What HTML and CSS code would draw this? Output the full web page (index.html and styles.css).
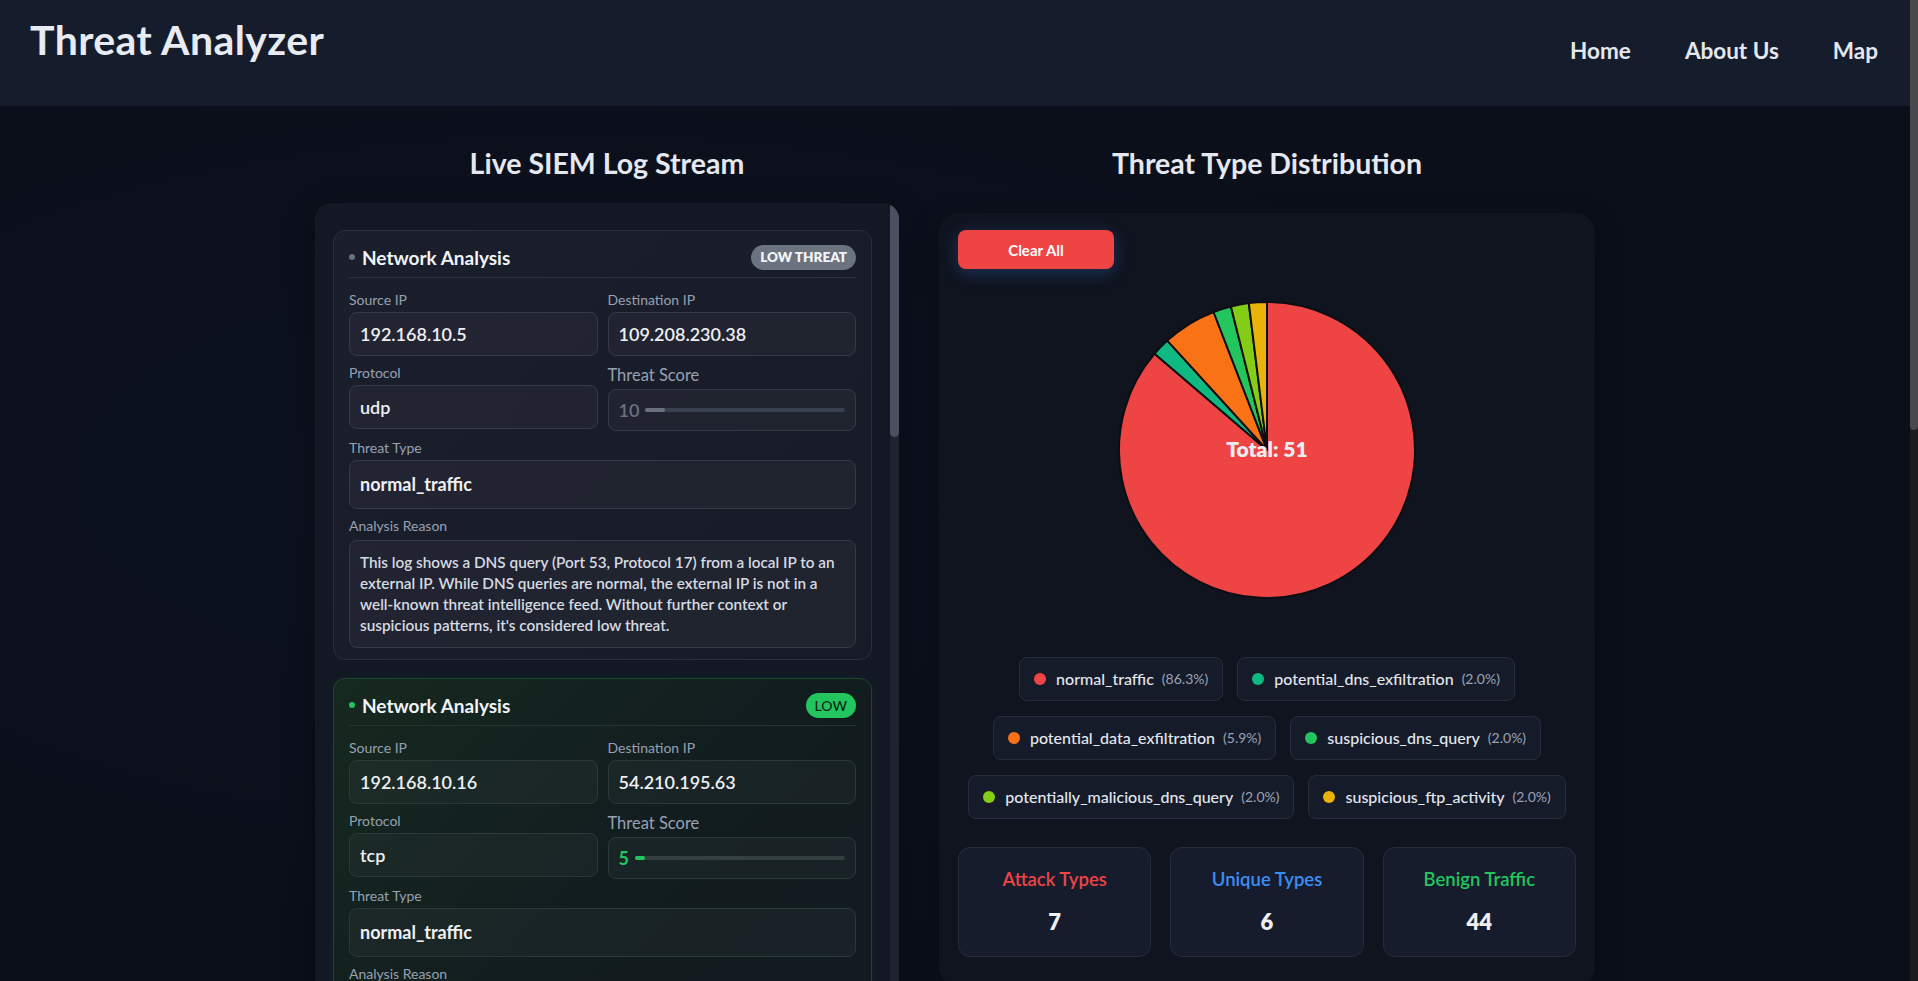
FILE: index.html
```html
<!DOCTYPE html>
<html lang="en">
<head>
<meta charset="utf-8">
<title>Threat Analyzer</title>
<link rel="stylesheet" href="styles.css">
</head>
<body>
<header class="topbar">
  <h1 class="brand">Threat Analyzer</h1>
  <nav class="nav">
    <a href="#" class="nav-link">Home</a>
    <a href="#" class="nav-link">About Us</a>
    <a href="#" class="nav-link">Map</a>
  </nav>
</header>

<main class="main">
  <div class="columns">
    <section class="col col-left">
      <h2 class="section-title">Live SIEM Log Stream</h2>
      <div class="log-panel">
        <div class="log-scroll">

          <article class="log-card">
            <div class="log-head">
              <div class="log-title"><span class="dot dot-gray"></span>Network Analysis</div>
              <span class="badge badge-gray">LOW THREAT</span>
            </div>
            <div class="grid2">
              <div class="field"><div class="label">Source IP</div><div class="box">192.168.10.5</div></div>
              <div class="field"><div class="label">Destination IP</div><div class="box">109.208.230.38</div></div>
              <div class="field"><div class="label">Protocol</div><div class="box">udp</div></div>
              <div class="field"><div class="label label-lg">Threat Score</div>
                <div class="box box-score"><span class="score score-gray">10</span><span class="track"><span class="fill fill-gray" style="width:10%"></span></span></div>
              </div>
            </div>
            <div class="field field-type"><div class="label">Threat Type</div><div class="box box-type">normal_traffic</div></div>
            <div class="field field-last"><div class="label label-reason">Analysis Reason</div><div class="box box-reason">This log shows a DNS query (Port 53, Protocol 17) from a local IP to an external IP. While DNS queries are normal, the external IP is not in a <span class="nowrap">well-known</span> threat intelligence feed. Without further context or suspicious patterns, it's considered low threat.</div></div>
          </article>

          <article class="log-card log-card-green">
            <div class="log-head">
              <div class="log-title"><span class="dot dot-green"></span>Network Analysis</div>
              <span class="badge badge-green">LOW</span>
            </div>
            <div class="grid2">
              <div class="field"><div class="label">Source IP</div><div class="box">192.168.10.16</div></div>
              <div class="field"><div class="label">Destination IP</div><div class="box">54.210.195.63</div></div>
              <div class="field"><div class="label">Protocol</div><div class="box">tcp</div></div>
              <div class="field"><div class="label label-lg">Threat Score</div>
                <div class="box box-score"><span class="score score-green">5</span><span class="track"><span class="fill fill-green" style="width:5%"></span></span></div>
              </div>
            </div>
            <div class="field field-type"><div class="label">Threat Type</div><div class="box box-type">normal_traffic</div></div>
            <div class="field field-last"><div class="label label-reason">Analysis Reason</div><div class="box box-reason">Outbound TCP connection from an internal host to a public cloud address. The destination is a common service provider and the traffic volume is normal, so it's considered low threat.</div></div>
          </article>

        </div>
        <div class="vscroll"><div class="vscroll-thumb"></div></div>
      </div>
    </section>

    <section class="col col-right">
      <h2 class="section-title section-title-right">Threat Type Distribution</h2>
      <div class="chart-panel">
        <button class="clear-btn" type="button">Clear All</button>
        <div class="pie-wrap">
          <svg class="pie" width="300" height="300" viewBox="0 0 300 300">
            <g stroke="#0c0e13" stroke-width="2" stroke-linejoin="round">
              <path fill="#ef4444" d="M150,150 L150,2 A148,148 0 1,1 37.60,53.71 Z"/>
              <path fill="#10b981" d="M150,150 L37.60,53.71 A148,148 0 0,1 50.29,40.63 Z"/>
              <path fill="#f97316" d="M150,150 L50.29,40.63 A148,148 0 0,1 96.54,11.99 Z"/>
              <path fill="#22c55e" d="M150,150 L96.54,11.99 A148,148 0 0,1 113.90,6.47 Z"/>
              <path fill="#84cc16" d="M150,150 L113.90,6.47 A148,148 0 0,1 131.81,3.12 Z"/>
              <path fill="#eab308" d="M150,150 L131.81,3.12 A148,148 0 0,1 150,2 Z"/>
            </g>
            <text class="pie-total" x="150" y="157" text-anchor="middle">Total: 51</text>
          </svg>
        </div>
        <div class="legend">
          <div class="legend-item"><span class="ldot" style="background:#ef4444"></span><span class="lname">normal_traffic</span><span class="lpct">(86.3%)</span></div>
          <div class="legend-item"><span class="ldot" style="background:#10b981"></span><span class="lname">potential_dns_exfiltration</span><span class="lpct">(2.0%)</span></div>
          <div class="legend-item"><span class="ldot" style="background:#f97316"></span><span class="lname">potential_data_exfiltration</span><span class="lpct">(5.9%)</span></div>
          <div class="legend-item"><span class="ldot" style="background:#22c55e"></span><span class="lname">suspicious_dns_query</span><span class="lpct">(2.0%)</span></div>
          <div class="legend-item"><span class="ldot" style="background:#84cc16"></span><span class="lname">potentially_malicious_dns_query</span><span class="lpct">(2.0%)</span></div>
          <div class="legend-item"><span class="ldot" style="background:#eab308"></span><span class="lname">suspicious_ftp_activity</span><span class="lpct">(2.0%)</span></div>
        </div>
        <div class="stats">
          <div class="stat"><div class="stat-title stat-red">Attack Types</div><div class="stat-value">7</div></div>
          <div class="stat"><div class="stat-title stat-blue">Unique Types</div><div class="stat-value">6</div></div>
          <div class="stat"><div class="stat-title stat-green">Benign Traffic</div><div class="stat-value">44</div></div>
        </div>
      </div>
    </section>
  </div>
</main>

<div class="page-scrollbar"><div class="page-scrollbar-thumb"></div></div>
</body>
</html>
```

FILE: styles.css
```css
* { box-sizing: border-box; }

html { background: #0a0f1a; }

body {
  margin: 0;
  padding-right: 8px;
  background: #0a0f1a;
  color: #e5e7eb;
  font-family: "Lato", "Noto Sans", sans-serif;
}

/* page scrollbar (drawn over the right gutter) */
.page-scrollbar {
  position: fixed;
  top: 0;
  right: 0;
  width: 8px;
  height: 100vh;
  background: #1c1c20;
}

.page-scrollbar-thumb {
  height: 430px;
  background: #48484d;
  border-radius: 0 0 4px 4px;
}

.topbar {
  height: 106px;
  background: #151d2c;
  display: flex;
  justify-content: space-between;
  align-items: flex-start;
  padding: 0 32px 0 30px;
}

.brand {
  margin: 16px 0 0;
  font-size: 41px;
  line-height: 48px;
  font-weight: 700;
  color: #e8ebf2;
  letter-spacing: 0.4px;
}

.nav {
  display: flex;
  gap: 54px;
  margin-top: 38px;
}

.nav-link {
  color: #e5e7ee;
  text-decoration: none;
  font-size: 22.5px;
  line-height: 26px;
  font-weight: 700;
}

.main {
  padding-top: 40px;
  padding-bottom: 40px;
  background: radial-gradient(ellipse at 30% 40%, #0d1220 0%, #0a0f1a 60%);
}

.columns {
  width: 1280px;
  margin: 0 auto;
  display: grid;
  grid-template-columns: 584px 656px;
  column-gap: 40px;
  align-items: start;
}

.section-title {
  margin: 0 0 23px;
  text-align: center;
  font-size: 28.5px;
  line-height: 34px;
  font-weight: 700;
  color: #e5e8f0;
}

.section-title-right { margin-bottom: 33px; }

/* log stream */
.log-panel {
  display: flex;
  height: 800px;
  overflow: hidden;
  background: #131824;
  border-radius: 16px;
  box-shadow: 0 10px 30px rgba(0, 0, 0, 0.35);
}

.log-scroll {
  flex: 1;
  min-width: 0;
  overflow: hidden;
  padding: 27px 18px 18px;
}

.vscroll {
  width: 9px;
  flex-shrink: 0;
  background: #1f2330;
}

.vscroll-thumb {
  height: 234px;
  background: #4b5060;
  border-radius: 5px;
}

.log-card {
  border: 1px solid #2a2f3c;
  border-radius: 12px;
  padding: 14px 15px 11px;
  margin-bottom: 18px;
  background: linear-gradient(135deg, #1b1f2b 0%, #171b27 100%);
}

.log-card-green {
  border-color: #1d4630;
  background: linear-gradient(135deg, #16291f 0%, #121d1f 50%, #121a20 100%);
  box-shadow: 0 0 12px rgba(34, 197, 94, 0.06);
}

.log-head {
  display: flex;
  justify-content: space-between;
  align-items: center;
  height: 33px;
  padding-bottom: 8px;
  border-bottom: 1px solid #2c3140;
  margin-bottom: 12px;
}

.log-card-green .log-head { border-bottom-color: #24352f; }

.log-title {
  display: flex;
  align-items: center;
  font-size: 19px;
  font-weight: 700;
  color: #f1f3f7;
}

.dot {
  width: 6px;
  height: 6px;
  border-radius: 50%;
  margin-right: 7px;
}
.dot-gray { background: #6b7280; }
.dot-green { background: #22c55e; }

.badge {
  height: 25px;
  line-height: 25px;
  border-radius: 13px;
  padding: 0 9px;
  font-size: 13.5px;
  font-weight: 800;
}
.badge-gray { background: #6b7280; color: #f3f4f6; }
.badge-green { background: #22c55e; color: #0d2a18; font-weight: 500; font-size: 14px; padding: 0 9px; }

.grid2 {
  display: grid;
  grid-template-columns: 1fr 1fr;
  column-gap: 10px;
  row-gap: 7px;
  margin-bottom: 7px;
}

.field { margin-bottom: 7px; }
.grid2 .field { margin-bottom: 0; }
.field-type { margin-bottom: 7px; }
.field-last { margin-bottom: 0; }

.label {
  font-size: 14px;
  line-height: 20px;
  color: #97a1b3;
  margin-bottom: 2px;
}
.label-lg { font-size: 16.5px; line-height: 24px; }
.label-reason { margin-bottom: 4px; }

.box {
  border: 1px solid #343a48;
  background: rgba(255, 255, 255, 0.035);
  border-radius: 8px;
  padding: 9px 10px;
  font-size: 18px;
  line-height: 24px;
  font-weight: 600;
  color: #eef0f4;
}

.log-card-green .box { border-color: #2b3a39; background: rgba(255, 255, 255, 0.03); }

.box-score {
  display: flex;
  align-items: center;
  padding: 8px 10px;
}

.score { font-size: 18px; font-weight: 600; margin-right: 6px; }
.score-gray { color: #6b7280; }
.score-green { color: #22c55e; font-weight: 700; }

.track {
  flex: 1;
  height: 4px;
  border-radius: 2px;
  background: #394050;
  display: block;
}
.log-card-green .track { background: #34403f; }

.fill { display: block; height: 100%; border-radius: 2px; }
.fill-gray { background: #6b7280; }
.fill-green { background: #22c55e; }

.box-type {
  padding: 11px 10px;
  line-height: 25px;
  font-weight: 700;
  margin-top: 1px;
}

.box-reason {
  font-size: 15.3px;
  line-height: 21px;
  font-weight: 600;
  color: #d6dae2;
  padding: 11px 10px;
}

.nowrap { white-space: nowrap; }

/* chart panel */
.chart-panel {
  background: #10141f;
  border-radius: 20px;
  padding: 17px 19px 30px;
  box-shadow: 0 10px 30px rgba(0, 0, 0, 0.3);
}

.clear-btn {
  display: block;
  width: 156px;
  height: 39px;
  border: none;
  border-radius: 8px;
  background: #ef4444;
  color: #fff;
  font-family: inherit;
  font-size: 15px;
  font-weight: 700;
  box-shadow: 0 4px 16px rgba(59, 130, 246, 0.28);
}

.pie-wrap {
  display: flex;
  justify-content: center;
  margin-top: 31px;
  margin-bottom: 57px;
}

.pie { display: block; }

.pie-total {
  fill: #ebedf2;
  font-family: "Lato", sans-serif;
  font-size: 21px;
  font-weight: 800;
}

.legend {
  display: flex;
  flex-wrap: wrap;
  justify-content: center;
  gap: 15px 14px;
}

.legend-item {
  display: flex;
  align-items: center;
  padding: 11px 14px;
  border: 1px solid #272d3c;
  background: #161b2a;
  border-radius: 8px;
  line-height: 20px;
}

.ldot {
  width: 12px;
  height: 12px;
  border-radius: 50%;
  margin-right: 10px;
}

.lname { font-size: 16px; font-weight: 500; color: #e3e7ee; }
.lpct { font-size: 14px; color: #9aa3b4; margin-left: 8px; }

.stats {
  margin-top: 28px;
  display: grid;
  grid-template-columns: repeat(3, 1fr);
  gap: 19px;
}

.stat {
  border: 1px solid #262c3d;
  background: #171c2d;
  border-radius: 12px;
  padding: 20px 10px;
  text-align: center;
}

.stat-title { font-size: 18.5px; line-height: 22px; font-weight: 600; }
.stat-red { color: #ef4444; }
.stat-blue { color: #3b8ef6; }
.stat-green { color: #22c55e; }

.stat-value {
  margin-top: 18px;
  font-size: 22px;
  line-height: 28px;
  font-weight: 800;
  color: #eef0f4;
}
```
